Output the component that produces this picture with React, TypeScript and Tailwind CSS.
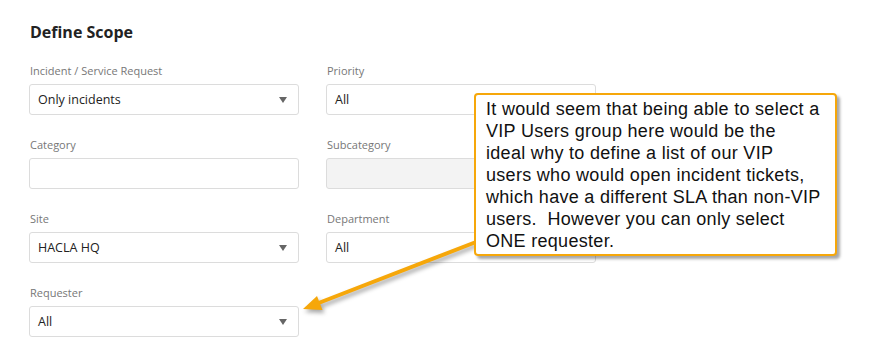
const fields = [
  { label: "Incident / Service Request", value: "Only incidents", select: true },
  { label: "Priority", value: "All", select: true },
  { label: "Category", value: "", select: false },
  { label: "Subcategory", value: "", select: false, disabled: true },
  { label: "Site", value: "HACLA HQ", select: true },
  { label: "Department", value: "All", select: true },
  { label: "Requester", value: "All", select: true },
];

const Caret = () => (
  <svg width="8" height="6" viewBox="0 0 8 6" className="shrink-0">
    <path d="M0 0 L8 0 L4 6 Z" fill="#666" />
  </svg>
);

const App = () => {
  return (
    <div className="relative h-[356px] w-[892px] overflow-hidden bg-white font-['Open_Sans',sans-serif]">
      <div className="pl-[29px] pt-[21px]">
        <h2 className="ml-px text-[16px] font-bold leading-[22px] text-[#222]">Define Scope</h2>

        <div className="mt-[20px] grid grid-cols-[270px_270px] gap-x-[27px] gap-y-[22px]">
          {fields.map((f) => (
            <div key={f.label} className="flex flex-col gap-[5px]">
              <p className="ml-px text-[11px] leading-[16px] text-[#777]">{f.label}</p>
              <div
                className={`flex h-[31px] items-center justify-between rounded-[3px] border border-[#dcdcdc] pl-[8px] pr-[11px] ${
                  f.disabled ? "bg-[#f3f3f3]" : "bg-white"
                }`}
              >
                <span className="text-[12.5px] leading-[17px] text-[#222]">{f.value}</span>
                {f.select && <Caret />}
              </div>
            </div>
          ))}
        </div>
      </div>

      <svg
        width="892"
        height="356"
        className="absolute left-0 top-0 drop-shadow-[2px_3px_2px_rgba(0,0,0,0.35)]"
      >
        <line x1="476" y1="242" x2="316" y2="304" stroke="#f6a70a" strokeWidth="4" />
        <path d="M303 309 L317 296 L322.5 310 Z" fill="#f6a70a" />
      </svg>

      <div className="absolute left-[474px] top-[93px] h-[163px] w-[363px] rounded-[4px] border-2 border-[#f6a70a] bg-white pl-[10px] pt-[3px] shadow-[3px_3px_3px_rgba(0,0,0,0.35)]">
        <p className="whitespace-pre font-['Liberation_Sans',Arial,sans-serif] text-[18px] leading-[22px] tracking-[0.3px] text-[#111]">
          {"It would seem that being able to select a\nVIP Users group here would be the\nideal why to define a list of our VIP\nusers who would open incident tickets,\nwhich have a different SLA than non-VIP\nusers.  However you can only select\nONE requester."}
        </p>
      </div>
    </div>
  );
};

export default App;
